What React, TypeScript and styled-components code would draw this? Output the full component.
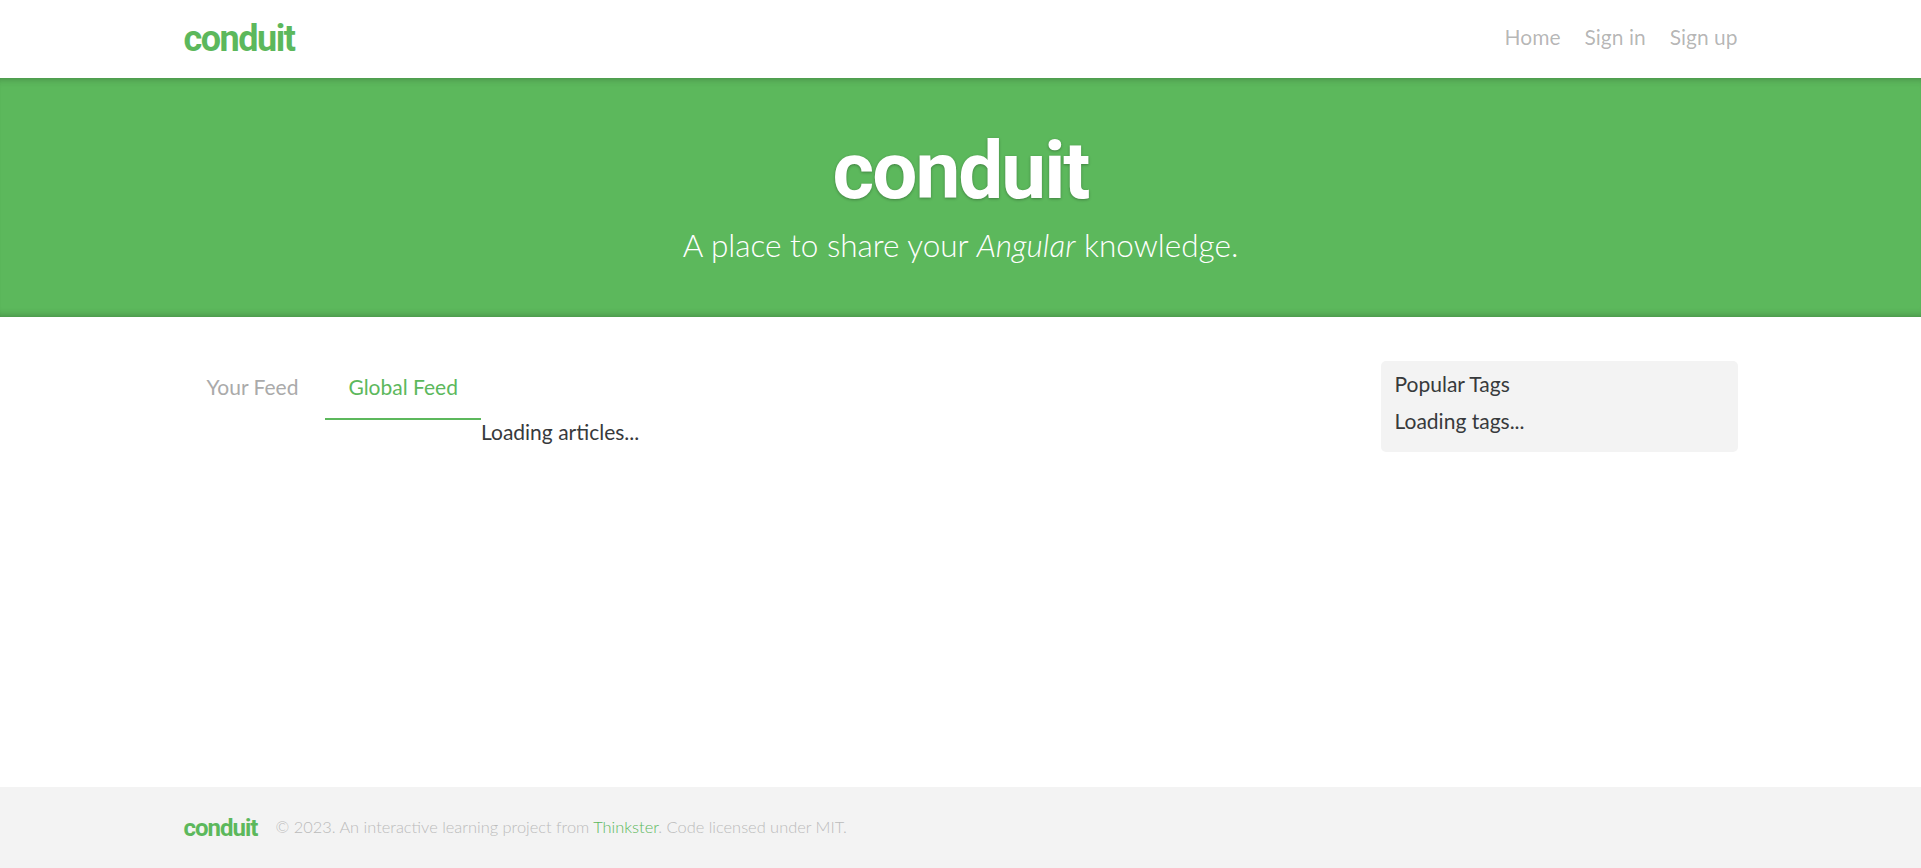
import styled, { createGlobalStyle } from "styled-components";

const GlobalStyle = createGlobalStyle`
    html, body {
        margin: 0;
        padding: 0;
    }
    body {
        font-family: Lato, "Noto Sans", sans-serif;
        font-size: 21px;
        line-height: 1.5;
        color: #373a3c;
        background: #fff;
    }
`;

const Page = styled.div`
    min-height: 100vh;
    display: flex;
    flex-direction: column;
`;

const Container = styled.div`
    width: 1554px;
    margin: 0 auto;
`;

const Navbar = styled.nav`
    height: 78px;
    background: #fff;
`;

const NavInner = styled(Container)`
    height: 100%;
    display: flex;
    align-items: center;
    justify-content: space-between;
`;

const Logo = styled.a<{ size: number; spacing: number }>`
    font-family: Roboto, "DejaVu Sans Condensed", sans-serif;
    font-weight: 700;
    font-size: ${(p) => p.size}px;
    letter-spacing: ${(p) => p.spacing}px;
    line-height: 1;
    color: #5cb85c;
    text-decoration: none;
`;

const NavLinks = styled.ul`
    list-style: none;
    margin: 0;
    padding: 0 0 4px;
    display: flex;
    gap: 24px;
`;

const NavLink = styled.a`
    color: rgba(0, 0, 0, 0.3);
    text-decoration: none;
`;

const Banner = styled.div`
    background: #5cb85c;
    color: #fff;
    text-align: center;
    padding: 49px 0 52px;
    box-shadow: inset 0 8px 8px -8px rgba(0, 0, 0, 0.3),
        inset 0 -8px 8px -8px rgba(0, 0, 0, 0.3);
`;

const BannerTitle = styled.h1`
    margin: 0;
    font-family: Roboto, "DejaVu Sans Condensed", sans-serif;
    font-weight: 700;
    font-size: 80px;
    letter-spacing: -2px;
    line-height: 1.1;
    text-shadow: 0 1px 3px rgba(0, 0, 0, 0.3);
`;

const BannerText = styled.p`
    margin: 11px 0 0;
    font-weight: 300;
    font-size: 31.5px;
    line-height: 1.25;
`;

const Main = styled(Container)`
    padding-top: 44px;
    display: grid;
    grid-template-columns: 1fr 357px;
    align-items: start;
`;

const FeedRow = styled.div`
    display: flex;
    align-items: flex-start;
`;

const Tabs = styled.ul`
    list-style: none;
    margin: 0;
    padding: 0;
    display: flex;
    gap: 4px;
`;

const Tab = styled.li<{ active?: boolean }>`
    padding: 11px 23px 16px;
    line-height: 30px;
    color: ${(p) => (p.active ? "#5cb85c" : "#aaa")};
    border-bottom: 2px solid ${(p) => (p.active ? "#5cb85c" : "transparent")};
    cursor: pointer;
`;

const Loading = styled.div`
    margin-top: 56px;
    line-height: 30px;
`;

const Sidebar = styled.div`
    background: #f3f3f3;
    border-radius: 5px;
    padding: 8px 14px 16px;
    line-height: 30px;
`;

const SidebarTitle = styled.p`
    margin: 0 0 7px;
`;

const Footer = styled.footer`
    margin-top: auto;
    background: #f3f3f3;
    height: 81px;
`;

const FooterInner = styled(Container)`
    height: 100%;
    display: flex;
    align-items: center;
`;

const Attribution = styled.span`
    margin-left: 18px;
    font-size: 16.4px;
    font-weight: 300;
    color: #bbb;
    a {
        color: #5cb85c;
        text-decoration: none;
    }
`;

function App() {
    return (
        <Page>
            <GlobalStyle />
            <Navbar>
                <NavInner>
                    <Logo size={36} spacing={-1.5}>conduit</Logo>
                    <NavLinks>
                        <li><NavLink>Home</NavLink></li>
                        <li><NavLink>Sign in</NavLink></li>
                        <li><NavLink>Sign up</NavLink></li>
                    </NavLinks>
                </NavInner>
            </Navbar>
            <Banner>
                <BannerTitle>conduit</BannerTitle>
                <BannerText>
                    A place to share your <i>Angular</i> knowledge.
                </BannerText>
            </Banner>
            <Main>
                <FeedRow>
                    <Tabs>
                        <Tab>Your Feed</Tab>
                        <Tab active>Global Feed</Tab>
                    </Tabs>
                    <Loading>Loading articles...</Loading>
                </FeedRow>
                <Sidebar>
                    <SidebarTitle>Popular Tags</SidebarTitle>
                    <div>Loading tags...</div>
                </Sidebar>
            </Main>
            <Footer>
                <FooterInner>
                    <Logo size={24} spacing={-1}>conduit</Logo>
                    <Attribution>
                        © 2023. An interactive learning project from <a>Thinkster</a>. Code licensed under MIT.
                    </Attribution>
                </FooterInner>
            </Footer>
        </Page>
    );
}

export default App;
